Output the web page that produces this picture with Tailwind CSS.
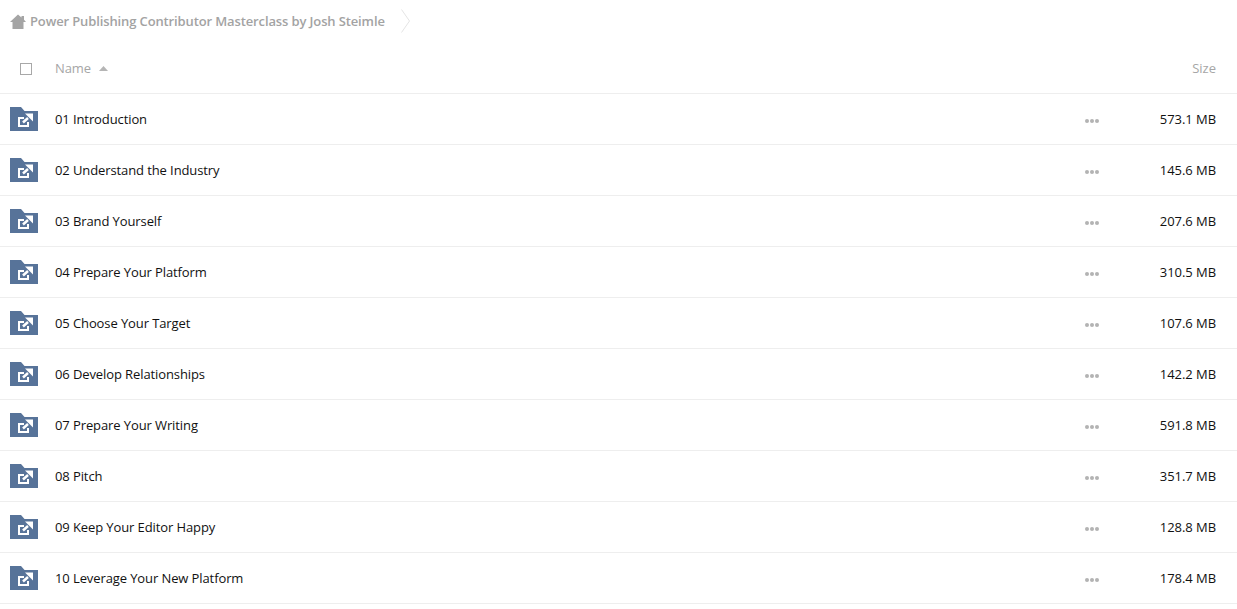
<!doctype html>
<html>
<head>
  <meta charset="UTF-8">
  <script src="https://cdn.jsdelivr.net/npm/@tailwindcss/browser@4"></script>
</head>
<body class="bg-white font-['Open_Sans',sans-serif] text-[13px] text-[#111] overflow-hidden">
  <!-- Breadcrumb -->
  <div class="flex h-[44px] items-center pl-[10px]">
    <svg class="w-[16px] h-[15px] mr-[4px] mb-[1px]" viewBox="0 0 16 15"><path d="M0 8 8 0.500 11.500 3.500V2H14V5.800L16 8H13.500V15H2.500V8z" fill="#a5a5a5"/></svg>
    <span class="font-semibold text-[#a3a3a3] tracking-[-0.125px]">Power Publishing Contributor Masterclass by Josh Steimle</span>
    <svg class="ml-[16px] w-[9px] h-[24px] mb-[2px]" viewBox="0 0 9 24"><path d="M0.500 0.500 8.500 12 0.500 23.500" fill="none" stroke="#e4e4e4"/></svg>
  </div>
  <!-- Table header -->
  <div class="flex h-[50px] items-center border-b border-[#eee] pr-[21px] text-[#a6a6a6]">
    <div class="w-[55px] pl-[20px]"><div class="w-[12px] h-[12px] border border-[#a8a8a8]"></div></div>
    <span class="tracking-[-0.1px]">Name</span>
    <svg class="ml-[8px] w-[9px] h-[5px]" viewBox="0 0 9 5"><path d="M4.500 0 9 5H0z" fill="#b5b5b5"/></svg>
    <span class="ml-auto">Size</span>
  </div>
  <!-- Rows -->
  <div id="rows">
    <div class="flex h-[51px] items-center border-b border-[#eee] pr-[21px]">
      <div class="w-[55px] pl-[10px]"><svg class="w-[28px] h-[24px]" viewBox="0 0 28 24"><use href="#folder"/></svg></div>
      <span class="mt-[2px] tracking-[-0.1px]">01 Introduction</span>
      <svg class="ml-auto w-[14px] h-[4px] mt-[3px]" viewBox="0 0 14 4"><use href="#dots"/></svg>
      <span class="w-[117px] mt-[2px] text-right tracking-[-0.05px]">573.1 MB</span>
    </div>
    <div class="flex h-[51px] items-center border-b border-[#eee] pr-[21px]">
      <div class="w-[55px] pl-[10px]"><svg class="w-[28px] h-[24px]" viewBox="0 0 28 24"><use href="#folder"/></svg></div>
      <span class="mt-[2px] tracking-[-0.1px]">02 Understand the Industry</span>
      <svg class="ml-auto w-[14px] h-[4px] mt-[3px]" viewBox="0 0 14 4"><use href="#dots"/></svg>
      <span class="w-[117px] mt-[2px] text-right tracking-[-0.05px]">145.6 MB</span>
    </div>
    <div class="flex h-[51px] items-center border-b border-[#eee] pr-[21px]">
      <div class="w-[55px] pl-[10px]"><svg class="w-[28px] h-[24px]" viewBox="0 0 28 24"><use href="#folder"/></svg></div>
      <span class="mt-[2px] tracking-[-0.1px]">03 Brand Yourself</span>
      <svg class="ml-auto w-[14px] h-[4px] mt-[3px]" viewBox="0 0 14 4"><use href="#dots"/></svg>
      <span class="w-[117px] mt-[2px] text-right tracking-[-0.05px]">207.6 MB</span>
    </div>
    <div class="flex h-[51px] items-center border-b border-[#eee] pr-[21px]">
      <div class="w-[55px] pl-[10px]"><svg class="w-[28px] h-[24px]" viewBox="0 0 28 24"><use href="#folder"/></svg></div>
      <span class="mt-[2px] tracking-[-0.1px]">04 Prepare Your Platform</span>
      <svg class="ml-auto w-[14px] h-[4px] mt-[3px]" viewBox="0 0 14 4"><use href="#dots"/></svg>
      <span class="w-[117px] mt-[2px] text-right tracking-[-0.05px]">310.5 MB</span>
    </div>
    <div class="flex h-[51px] items-center border-b border-[#eee] pr-[21px]">
      <div class="w-[55px] pl-[10px]"><svg class="w-[28px] h-[24px]" viewBox="0 0 28 24"><use href="#folder"/></svg></div>
      <span class="mt-[2px] tracking-[-0.1px]">05 Choose Your Target</span>
      <svg class="ml-auto w-[14px] h-[4px] mt-[3px]" viewBox="0 0 14 4"><use href="#dots"/></svg>
      <span class="w-[117px] mt-[2px] text-right tracking-[-0.05px]">107.6 MB</span>
    </div>
    <div class="flex h-[51px] items-center border-b border-[#eee] pr-[21px]">
      <div class="w-[55px] pl-[10px]"><svg class="w-[28px] h-[24px]" viewBox="0 0 28 24"><use href="#folder"/></svg></div>
      <span class="mt-[2px] tracking-[-0.1px]">06 Develop Relationships</span>
      <svg class="ml-auto w-[14px] h-[4px] mt-[3px]" viewBox="0 0 14 4"><use href="#dots"/></svg>
      <span class="w-[117px] mt-[2px] text-right tracking-[-0.05px]">142.2 MB</span>
    </div>
    <div class="flex h-[51px] items-center border-b border-[#eee] pr-[21px]">
      <div class="w-[55px] pl-[10px]"><svg class="w-[28px] h-[24px]" viewBox="0 0 28 24"><use href="#folder"/></svg></div>
      <span class="mt-[2px] tracking-[-0.1px]">07 Prepare Your Writing</span>
      <svg class="ml-auto w-[14px] h-[4px] mt-[3px]" viewBox="0 0 14 4"><use href="#dots"/></svg>
      <span class="w-[117px] mt-[2px] text-right tracking-[-0.05px]">591.8 MB</span>
    </div>
    <div class="flex h-[51px] items-center border-b border-[#eee] pr-[21px]">
      <div class="w-[55px] pl-[10px]"><svg class="w-[28px] h-[24px]" viewBox="0 0 28 24"><use href="#folder"/></svg></div>
      <span class="mt-[2px] tracking-[-0.1px]">08 Pitch</span>
      <svg class="ml-auto w-[14px] h-[4px] mt-[3px]" viewBox="0 0 14 4"><use href="#dots"/></svg>
      <span class="w-[117px] mt-[2px] text-right tracking-[-0.05px]">351.7 MB</span>
    </div>
    <div class="flex h-[51px] items-center border-b border-[#eee] pr-[21px]">
      <div class="w-[55px] pl-[10px]"><svg class="w-[28px] h-[24px]" viewBox="0 0 28 24"><use href="#folder"/></svg></div>
      <span class="mt-[2px] tracking-[-0.1px]">09 Keep Your Editor Happy</span>
      <svg class="ml-auto w-[14px] h-[4px] mt-[3px]" viewBox="0 0 14 4"><use href="#dots"/></svg>
      <span class="w-[117px] mt-[2px] text-right tracking-[-0.05px]">128.8 MB</span>
    </div>
    <div class="flex h-[51px] items-center border-b border-[#eee] pr-[21px]">
      <div class="w-[55px] pl-[10px]"><svg class="w-[28px] h-[24px]" viewBox="0 0 28 24"><use href="#folder"/></svg></div>
      <span class="mt-[2px] tracking-[-0.1px]">10 Leverage Your New Platform</span>
      <svg class="ml-auto w-[14px] h-[4px] mt-[3px]" viewBox="0 0 14 4"><use href="#dots"/></svg>
      <span class="w-[117px] mt-[2px] text-right tracking-[-0.05px]">178.4 MB</span>
    </div>
  </div>
  <!-- Shared icons -->
  <svg class="hidden">
    <defs>
      <g id="folder">
        <path d="M0 0H11L14.500 4H28V24H0z" fill="#577399"/>
        <path d="M14 11H9V19H18V15" fill="none" stroke="#fff" stroke-width="2"/>
        <path d="M13 15.500 18 11" stroke="#fff" stroke-width="2.500" fill="none"/>
        <path d="M15 6.500H23V14.500z" fill="#fff"/>
      </g>
      <g id="dots" fill="#b3b3b3">
        <circle cx="2" cy="2" r="2"/><circle cx="7" cy="2" r="2"/><circle cx="12" cy="2" r="2"/>
      </g>
    </defs>
  </svg>
</body>
</html>
